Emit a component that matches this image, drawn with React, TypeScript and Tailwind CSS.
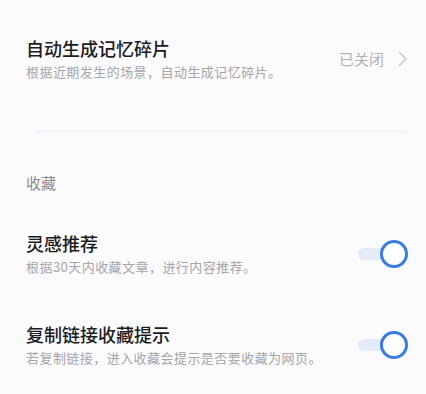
import React from "react";

function Toggle() {
  return (
    <div className="relative h-[28px] w-[50px] shrink-0">
      <div className="absolute left-0 top-[8px] h-[12px] w-[36px] rounded-full bg-[#e3ebf8]" />
      <div className="absolute right-0 top-0 h-[28px] w-[28px] rounded-full border-[3.5px] border-[#3a7be2] bg-white" />
    </div>
  );
}

function SettingRow({
  title,
  desc,
  right,
  className = "",
}: {
  title: string;
  desc: string;
  right: React.ReactNode;
  className?: string;
}) {
  return (
    <div className={`flex items-center justify-between pl-[26px] pr-[18px] ${className}`}>
      <div className="flex flex-col">
        <div className="text-[18px] leading-[24px] font-medium text-[#1c1c1e]">{title}</div>
        <div className="mt-[3px] text-[13px] leading-[18px] tracking-[0.45px] text-[#a6a6a9]">{desc}</div>
      </div>
      {right}
    </div>
  );
}

export default function App() {
  return (
    <div
      className="h-[394px] w-full overflow-hidden bg-[#fbfafd] pt-[36px]"
      style={{ fontFamily: '"Noto Sans CJK SC", "Noto Sans", sans-serif' }}
    >
      {/* 记忆碎片 */}
      <SettingRow
        title="自动生成记忆碎片"
        desc="根据近期发生的场景，自动生成记忆碎片。"
        right={
          <div className="flex items-center gap-[14px]">
            <span className="text-[15px] leading-[20px] text-[#b2b2b5]">已关闭</span>
            <svg width="10" height="16" viewBox="0 0 10 16" fill="none">
              <path d="M1.5 1.5 L8 8 L1.5 14.5" stroke="#c9c9cc" strokeWidth="1.6" strokeLinecap="round" strokeLinejoin="round" />
            </svg>
          </div>
        }
      />

      <div className="ml-[35px] mr-[19px] mt-[49px] h-[3px] rounded-full bg-[#f4f3f7]" />

      {/* 收藏 */}
      <div className="mt-[40px] pl-[26px] text-[15px] leading-[20px] text-[#8c8c8f]">收藏</div>

      <SettingRow
        className="mt-[38px]"
        title="灵感推荐"
        desc="根据30天内收藏文章，进行内容推荐。"
        right={<Toggle />}
      />

      <SettingRow
        className="mt-[46px]"
        title="复制链接收藏提示"
        desc="若复制链接，进入收藏会提示是否要收藏为网页。"
        right={<Toggle />}
      />
    </div>
  );
}
